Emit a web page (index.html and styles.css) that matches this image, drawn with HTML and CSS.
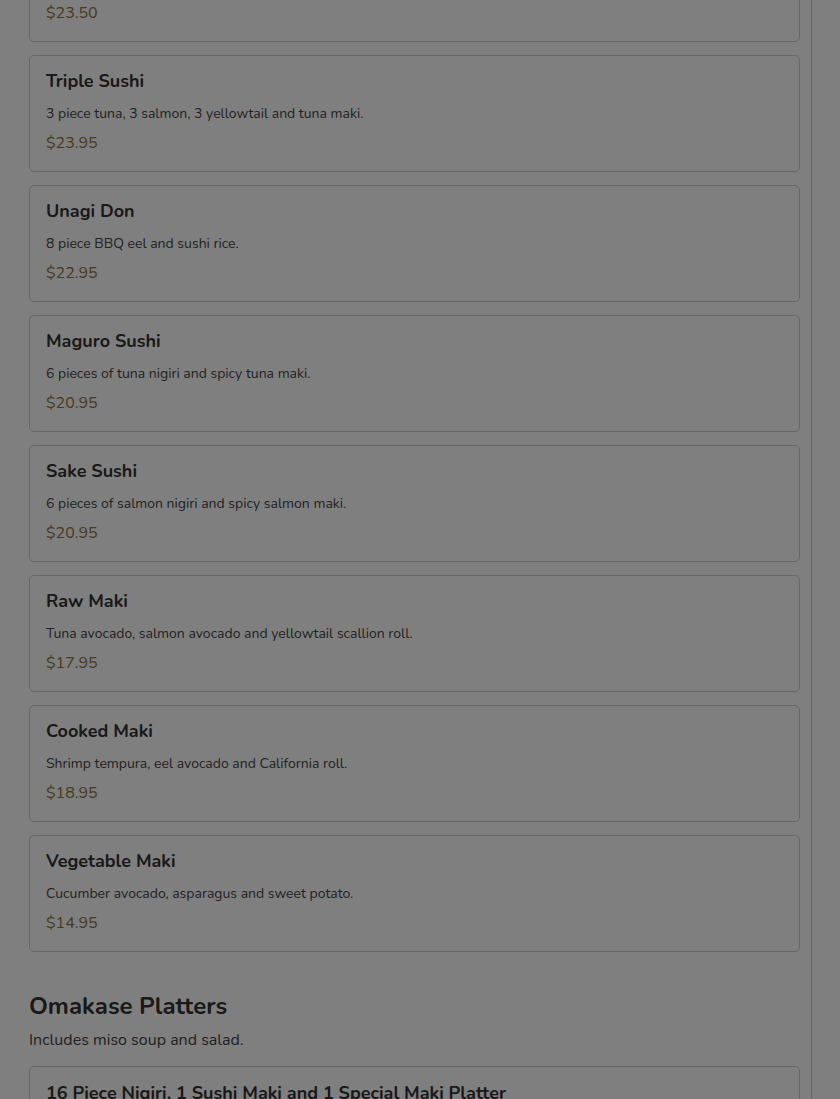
FILE: index.html
```html
<!DOCTYPE html>
<html lang="en">
<head>
<meta charset="utf-8">
<title>Menu</title>
<link rel="stylesheet" href="styles.css">
</head>
<body>
<div class="page">
  <main class="menu">
    <section class="section section-first">
      <div class="card">
        <h3 class="item-name">Chirashi</h3>
        <p class="item-desc">Assorted sashimi over sushi rice.</p>
        <p class="item-price">$23.50</p>
      </div>
      <div class="card">
        <h3 class="item-name">Triple Sushi</h3>
        <p class="item-desc">3 piece tuna, 3 salmon, 3 yellowtail and tuna maki.</p>
        <p class="item-price">$23.95</p>
      </div>
      <div class="card">
        <h3 class="item-name">Unagi Don</h3>
        <p class="item-desc">8 piece BBQ eel and sushi rice.</p>
        <p class="item-price">$22.95</p>
      </div>
      <div class="card">
        <h3 class="item-name">Maguro Sushi</h3>
        <p class="item-desc">6 pieces of tuna nigiri and spicy tuna maki.</p>
        <p class="item-price">$20.95</p>
      </div>
      <div class="card">
        <h3 class="item-name">Sake Sushi</h3>
        <p class="item-desc">6 pieces of salmon nigiri and spicy salmon maki.</p>
        <p class="item-price">$20.95</p>
      </div>
      <div class="card">
        <h3 class="item-name">Raw Maki</h3>
        <p class="item-desc">Tuna avocado, salmon avocado and yellowtail scallion roll.</p>
        <p class="item-price">$17.95</p>
      </div>
      <div class="card">
        <h3 class="item-name">Cooked Maki</h3>
        <p class="item-desc">Shrimp tempura, eel avocado and California roll.</p>
        <p class="item-price">$18.95</p>
      </div>
      <div class="card">
        <h3 class="item-name">Vegetable Maki</h3>
        <p class="item-desc">Cucumber avocado, asparagus and sweet potato.</p>
        <p class="item-price">$14.95</p>
      </div>
    </section>
    <section class="section">
      <h2 class="section-title">Omakase Platters</h2>
      <p class="section-note">Includes miso soup and salad.</p>
      <div class="card card-last">
        <h3 class="item-name">16 Piece Nigiri, 1 Sushi Maki and 1 Special Maki Platter</h3>
        <p class="item-desc">Chef's choice of nigiri with one sushi maki and one special maki.</p>
        <p class="item-price">$58.95</p>
      </div>
    </section>
  </main>
</div>
<div class="backdrop"></div>
</body>
</html>
```

FILE: styles.css
```css
* { box-sizing: border-box; }
html, body {
  margin: 0;
  padding: 0;
  background: #ffffff;
  overflow: hidden;
  height: 100%;
}
body {
  font-family: "Nunito", "Lato", "Noto Sans", sans-serif;
  color: #333333;
}
.page {
  display: flex;
  height: 100%;
}
.menu {
  width: 812px;
  flex: none;
  padding: 0 11px 0 29px;
  border-right: 1px solid #cccccc;
  margin-top: -75px;
}
.section {
  display: flex;
  flex-direction: column;
  gap: 13px;
}
.section + .section {
  margin-top: 39px;
  gap: 0;
}
.card {
  border: 1px solid #cfcfcf;
  border-radius: 5px;
  background: #ffffff;
  padding: 14px 16px 17px;
  height: 117px;
}
.card-last {
  padding-top: 15px;
}
.item-name {
  margin: 0;
  font-size: 18px;
  line-height: 22px;
  font-weight: 700;
  color: #333333;
}
.item-desc {
  margin: 12px 0 0;
  font-size: 14px;
  line-height: 20px;
  color: #444444;
}
.item-price {
  margin: 8px 0 0;
  font-size: 16px;
  line-height: 22px;
  color: #8c7444;
}
.section-title {
  margin: 0;
  font-size: 24px;
  line-height: 30px;
  font-weight: 700;
  color: #333333;
}
.section-note {
  margin: 8px 0 0;
  font-size: 16px;
  line-height: 22px;
  color: #444444;
}
.section-note + .card {
  margin-top: 15px;
}
.backdrop {
  position: fixed;
  inset: 0;
  background: rgba(0, 0, 0, 0.5);
}
```
